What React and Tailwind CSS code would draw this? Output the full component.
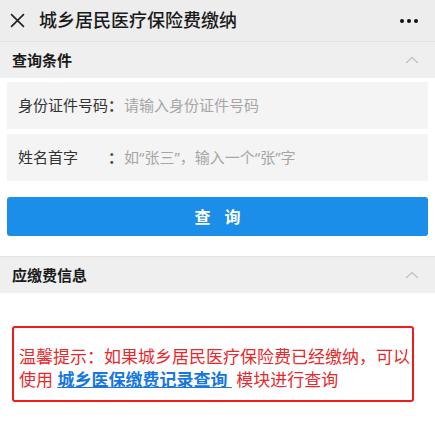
import React from 'react';

const font = { fontFamily: '"Noto Sans", "Noto Sans CJK SC", sans-serif' };

const Chevron = () => (
  <svg width="14" height="8" viewBox="0 0 14 8" fill="none" stroke="#c4c4c4" strokeWidth="1.4">
    <path d="M1 7 L7 1.5 L13 7" />
  </svg>
);

const SectionHeader = ({ title }) => (
  <div className="flex items-center justify-between h-[37px] bg-[#efefef] border-t border-[#e2e2e2] pl-3 pr-4">
    <span className="text-[15px] font-bold text-[#1a1a1a]">{title}</span>
    <Chevron />
  </div>
);

const Field = ({ label, placeholder }) => (
  <div className="flex items-center h-[47px] bg-[#f4f4f4] mx-[7px] pl-[11px] whitespace-nowrap text-[15px]">
    <span className="text-[#333] shrink-0 w-[90px]">{label}</span>
    <span className="font-bold text-[#444] shrink-0 w-[16px]">：</span>
    <span className="text-[#a6a6a6]">{placeholder}</span>
  </div>
);

const App = () => {
  return (
    <div className="w-[435px] h-[437px] bg-white overflow-hidden" style={font}>
      {/* Top bar */}
      <div className="flex items-center h-[41px] bg-[#ededed] pl-[10px] pr-[17px]">
        <svg width="15" height="15" viewBox="0 0 14 14" stroke="#222" strokeWidth="1.5">
          <path d="M1 1 L13 13 M13 1 L1 13" />
        </svg>
        <span className="ml-[14px] text-[18px] font-medium text-[#1a1a1a] flex-1">城乡居民医疗保险费缴纳</span>
        <div className="flex gap-[3px]">
          <span className="w-[4px] h-[4px] rounded-full bg-[#111]" />
          <span className="w-[4px] h-[4px] rounded-full bg-[#111]" />
          <span className="w-[4px] h-[4px] rounded-full bg-[#111]" />
        </div>
      </div>

      <SectionHeader title="查询条件" />

      <div className="flex flex-col gap-[5px] pt-[4px]">
        <Field label="身份证件号码" placeholder="请输入身份证件号码" />
        <Field label="姓名首字" placeholder="如“张三”，输入一个“张”字" />
      </div>

      <div className="mx-[7px] mt-[16px]">
        <button className="w-full h-[39px] rounded-[3px] bg-[#1a8ee8] text-white text-[16px] font-bold tracking-[14px] pl-[14px]">
          查询
        </button>
      </div>

      <div className="mt-[20px]">
        <SectionHeader title="应缴费信息" />
      </div>

      <div className="mt-[33px] mx-[12px] w-[402px] border-2 border-[#f01c1c] rounded-[3px] pl-[5px] pt-[17px] pb-[9px] text-[17px] leading-[23px] text-[#e8282a]">
        <p className="whitespace-nowrap">温馨提示：如果城乡居民医疗保险费已经缴纳，可以</p>
        <p className="whitespace-nowrap">
          使用{' '}
          <a className="text-[#1677e0] font-bold underline">{'城乡医保缴费记录查询\u00a0'}</a>
          {' '}模块进行查询
        </p>
      </div>
    </div>
  );
};

export default App;
